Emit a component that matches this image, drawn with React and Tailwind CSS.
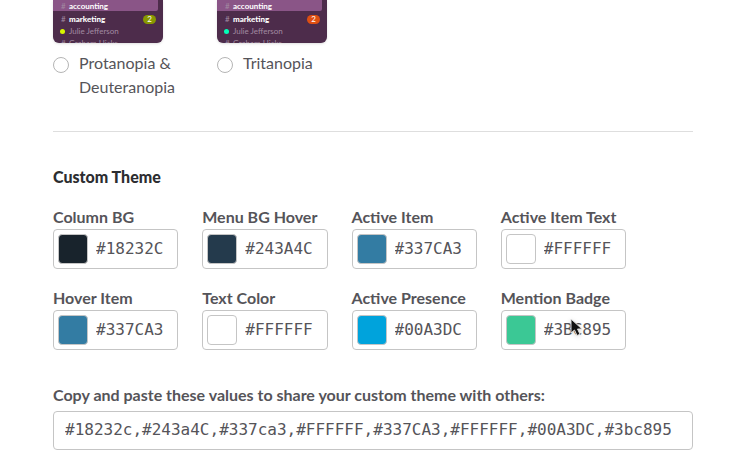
const presets = [
  { id: "protanopia", label: "Protanopia & Deuteranopia", dot: "bg-[#d8f500]", badge: "bg-[#889800]" },
  { id: "tritanopia", label: "Tritanopia", dot: "bg-[#00ffb7]", badge: "bg-[#de4f12]" },
];

const colors = [
  { id: "column-bg", label: "Column BG", value: "#18232C", swatch: "bg-[#18232c]" },
  { id: "menu-bg-hover", label: "Menu BG Hover", value: "#243A4C", swatch: "bg-[#243a4c]" },
  { id: "active-item", label: "Active Item", value: "#337CA3", swatch: "bg-[#337ca3]" },
  { id: "active-item-text", label: "Active Item Text", value: "#FFFFFF", swatch: "bg-white" },
  { id: "hover-item", label: "Hover Item", value: "#337CA3", swatch: "bg-[#337ca3]" },
  { id: "text-color", label: "Text Color", value: "#FFFFFF", swatch: "bg-white" },
  { id: "active-presence", label: "Active Presence", value: "#00A3DC", swatch: "bg-[#00a3dc]" },
  { id: "mention-badge", label: "Mention Badge", value: "#3BC895", swatch: "bg-[#3bc895]", pointer: true },
];

function ThemePreview({ dot, badge }) {
  return (
    <div className="h-[43px] w-[110px] overflow-hidden rounded-b-md bg-[#4d2c4b] text-[8px] text-[#a28ba1] shadow-sm">
      <div className="mr-[5px] flex h-[11px] items-center gap-1 rounded-br-xs bg-[#8a5587] pl-2">
        <span className="w-1">#</span>
        <span className="font-bold text-white">accounting</span>
      </div>
      <div className="flex h-4 items-center gap-1 pr-[7px] pl-2">
        <span className="w-1">#</span>
        <span className="font-black text-white">marketing</span>
        <span className={`ml-auto h-[9px] w-[13px] rounded-full text-center leading-[9px] text-white ${badge}`}>2</span>
      </div>
      <div className="flex h-2 items-center gap-1 pl-[7px]">
        <span className={`size-[5px] rounded-full ${dot}`} />
        <span>Julie Jefferson</span>
      </div>
      <div className="flex h-4 items-center gap-1 pl-2">
        <span className="w-1">#</span>
        <span>Graham Hicks</span>
      </div>
    </div>
  );
}

function PresetOption({ id, label, dot, badge }) {
  return (
    <label htmlFor={id} className="block w-[164px]">
      <ThemePreview dot={dot} badge={badge} />
      <span className="mt-2 flex gap-[10px]">
        <input
          id={id}
          type="radio"
          name="theme"
          className="mt-1.5 size-4 shrink-0 appearance-none rounded-full border border-[#b5b5b5] bg-white checked:border-4"
        />
        <span>{label}</span>
      </span>
    </label>
  );
}

function MousePointer() {
  return (
    <svg viewBox="0 0 18 20" className="pointer-events-none absolute top-[7px] left-[67px] h-5 w-[18px] drop-shadow-sm" aria-hidden="true">
      <path d="M2 1v14l3.5-3 2.5 5.5 3-1.3-2.5-5.2H13z" fill="#111" stroke="#ddd" strokeWidth="1" />
    </svg>
  );
}

function ColorField({ id, label, value, swatch, pointer }) {
  return (
    <div>
      <label htmlFor={id} className="block font-bold whitespace-nowrap">{label}</label>
      <div className="relative flex h-10 items-center gap-2 rounded-sm border border-[#c5c5c5] pl-1">
        <button type="button" aria-label={`Pick ${label}`} className={`size-[30px] shrink-0 rounded-sm border border-[#c5c5c5] ${swatch}`} />
        <input
          id={id}
          defaultValue={value}
          className="w-full min-w-0 bg-transparent font-['DejaVu_Sans_Mono',monospace] outline-none"
        />
        {pointer && <MousePointer />}
      </div>
    </div>
  );
}

export default function App() {
  return (
    <main className="min-h-screen bg-white pr-10 pb-4 pl-[53px] font-[Lato,sans-serif] text-base leading-6 text-[#555459]">
      <div className="flex">
        {presets.map((preset) => (
          <PresetOption key={preset.id} {...preset} />
        ))}
      </div>

      <hr className="mt-8 border-[#dedede]" />

      <h2 className="mt-[33px] font-black text-[#2c2d30]">Custom Theme</h2>

      <div className="mt-4 grid grid-cols-4 gap-x-6 gap-y-[17px] pr-[67px]">
        {colors.map((color) => (
          <ColorField key={color.id} {...color} />
        ))}
      </div>

      <label htmlFor="theme-values" className="mt-[33px] block font-bold">
        Copy and paste these values to share your custom theme with others:
      </label>
      <input
        id="theme-values"
        defaultValue="#18232c,#243a4C,#337ca3,#FFFFFF,#337CA3,#FFFFFF,#00A3DC,#3bc895"
        className="mt-1 block h-[39px] w-full rounded-sm border border-[#c5c5c5] px-[11px] pb-0.5 font-['DejaVu_Sans_Mono',monospace] outline-none"
      />
    </main>
  );
}
